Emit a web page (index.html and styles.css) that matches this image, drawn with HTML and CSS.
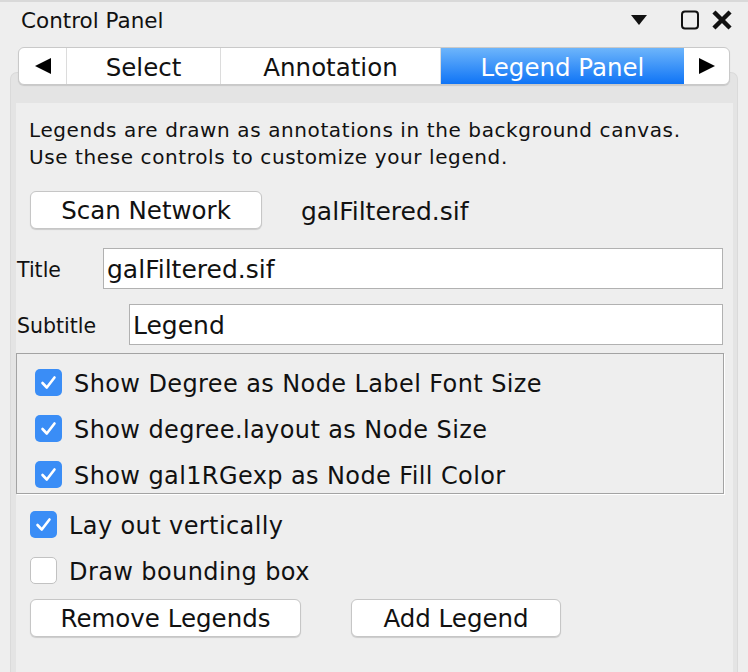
FILE: index.html
```html
<!DOCTYPE html>
<html>
<head>
<meta charset="utf-8">
<link rel="stylesheet" href="styles.css">
</head>
<body>
<div class="header">
  <span class="header-title">Control Panel</span>
  <div class="header-icons">
    <svg class="ic-down" width="18" height="12" viewBox="0 0 18 12"><path d="M1 1 H17 L9 11 Z" fill="#111"/></svg>
    <svg class="ic-max" width="20" height="20" viewBox="0 0 20 20"><rect x="2" y="1.5" width="16" height="17" rx="3" fill="none" stroke="#111" stroke-width="2"/></svg>
    <svg class="ic-close" width="20" height="20" viewBox="0 0 20 20"><path d="M3.5 3.5 L16.5 16.5 M16.5 3.5 L3.5 16.5" stroke="#111" stroke-width="4.4" stroke-linecap="square"/></svg>
  </div>
</div>

<div class="tabbar">
  <div class="tab tab-arrow"><svg width="18" height="18" viewBox="0 0 18 18"><path d="M17 1 V17 L1 9 Z" fill="#000"/></svg></div>
  <div class="tab tab-select">Select</div>
  <div class="tab tab-annot">Annotation</div>
  <div class="tab tab-legend active">Legend Panel</div>
  <div class="tab tab-arrow tab-right"><svg width="18" height="18" viewBox="0 0 18 18"><path d="M1 1 V17 L17 9 Z" fill="#000"/></svg></div>
</div>

<div class="pane">
  <div class="content">
    <p class="desc">Legends are drawn as annotations in the background canvas.<br>Use these controls to customize your legend.</p>

    <div class="scan-row">
      <button class="btn btn-scan">Scan Network</button>
      <span class="net-name">galFiltered.sif</span>
    </div>

    <div class="field-row">
      <span class="field-label">Title</span>
      <div class="field field-title">galFiltered.sif</div>
    </div>

    <div class="field-row field-row-sub">
      <span class="field-label">Subtitle</span>
      <div class="field field-sub">Legend</div>
    </div>

    <div class="group">
      <div class="check-row"><span class="cb on"><svg width="27" height="27" viewBox="0 0 27 27"><path d="M7.5 14 L11.8 18.5 L19.5 8.5" fill="none" stroke="#fff" stroke-width="2.6" stroke-linecap="round" stroke-linejoin="round"/></svg></span><span class="cb-label">Show Degree as Node Label Font Size</span></div>
      <div class="check-row"><span class="cb on"><svg width="27" height="27" viewBox="0 0 27 27"><path d="M7.5 14 L11.8 18.5 L19.5 8.5" fill="none" stroke="#fff" stroke-width="2.6" stroke-linecap="round" stroke-linejoin="round"/></svg></span><span class="cb-label">Show degree.layout as Node Size</span></div>
      <div class="check-row"><span class="cb on"><svg width="27" height="27" viewBox="0 0 27 27"><path d="M7.5 14 L11.8 18.5 L19.5 8.5" fill="none" stroke="#fff" stroke-width="2.6" stroke-linecap="round" stroke-linejoin="round"/></svg></span><span class="cb-label">Show gal1RGexp as Node Fill Color</span></div>
    </div>

    <div class="opts">
      <div class="check-row opt"><span class="cb on"><svg width="27" height="27" viewBox="0 0 27 27"><path d="M7.5 14 L11.8 18.5 L19.5 8.5" fill="none" stroke="#fff" stroke-width="2.6" stroke-linecap="round" stroke-linejoin="round"/></svg></span><span class="cb-label">Lay out vertically</span></div>
      <div class="check-row opt"><span class="cb off"></span><span class="cb-label">Draw bounding box</span></div>
    </div>

    <div class="btn-row">
      <button class="btn btn-remove">Remove Legends</button>
      <button class="btn btn-add">Add Legend</button>
    </div>
  </div>
</div>
</body>
</html>
```

FILE: styles.css
```css
html, body {
  margin: 0;
  padding: 0;
}
body {
  width: 748px;
  height: 672px;
  overflow: hidden;
  background: #eeeeee;
  font-family: "DejaVu Sans", "Noto Sans", sans-serif;
  color: #111;
  border-top: 2px solid #d9d9d9;
  box-sizing: border-box;
}
.header {
  height: 45px;
  display: flex;
  align-items: flex-start;
  justify-content: space-between;
  padding: 0 16px 0 21px;
  box-sizing: border-box;
}
.header-title {
  font-size: 21.5px;
  line-height: 22px;
  margin-top: 8px;
}
.header-icons {
  display: flex;
  align-items: center;
  margin-top: 8px;
}
.ic-down { margin-right: 32px; }
.ic-max { margin-right: 12px; }

.tabbar {
  position: relative;
  z-index: 1;
  margin: 0 18px;
  height: 38px;
  display: flex;
  background: #fff;
  border: 1px solid #c9c9c9;
  border-radius: 6px;
  box-sizing: border-box;
  box-shadow: 0 1px 1px rgba(0,0,0,0.12);
  overflow: hidden;
}
.tab {
  display: flex;
  align-items: center;
  justify-content: center;
  font-size: 24.5px;
  color: #111;
  border-right: 1px solid #dcdcdc;
  box-sizing: border-box;
  padding-top: 2px;
}
.tab-arrow { width: 48px; padding-top: 0; }
.tab-select { width: 154px; }
.tab-annot { width: 220px; }
.tab-legend { width: 243px; border-right: none; }
.tab-right { flex: 1; border-right: none; }
.tab.active {
  color: #fff;
  background: linear-gradient(#6db5fb, #0f74f6);
}

.pane {
  margin: -13px 10px 0 10px;
  height: 614px;
  background: #e4e4e4;
  border: 1px solid #dadada;
  border-bottom: none;
  border-radius: 7px 7px 0 0;
  padding: 30px 4px 0 5px;
  box-sizing: border-box;
}
.content {
  background: #eeeeee;
  height: 100%;
  padding-top: 14px;
  box-sizing: border-box;
}
.desc {
  margin: 0 0 0 13px;
  font-size: 20px;
  line-height: 27px;
  letter-spacing: 0.6px;
}
.scan-row {
  display: flex;
  align-items: center;
  margin-top: 20px;
  padding-left: 14px;
}
.btn {
  font-family: inherit;
  font-size: 24.5px;
  color: #111;
  background: #fff;
  border: 1px solid #c6c6c6;
  border-radius: 6px;
  box-shadow: 0 1px 1px rgba(0,0,0,0.15);
  height: 38px;
  padding: 1px 0 0 0;
}
.btn-scan { width: 232px; }
.net-name {
  font-size: 25px;
  margin-left: 39px;
  padding-top: 3px;
}
.field-row {
  display: flex;
  align-items: center;
  justify-content: space-between;
  margin-top: 19px;
  padding-left: 1px;
  padding-right: 10px;
}
.field-row-sub { margin-top: 15px; }
.field-label {
  font-size: 20.5px;
  padding-top: 3px;
}
.field {
  height: 41px;
  background: #fff;
  border: 1px solid #b1b1b1;
  box-sizing: border-box;
  font-size: 25px;
  line-height: 41px;
  padding-left: 3px;
}
.field-title { width: 620px; }
.field-sub { width: 594px; }

.group {
  margin-top: 8px;
  width: 708px;
  height: 141px;
  border: 1px solid #a3a3a3;
  box-shadow: 1px 1px 0 #ffffff;
  box-sizing: border-box;
  padding: 5px 0 0 18px;
}
.check-row {
  display: flex;
  align-items: center;
  height: 46px;
}
.cb {
  width: 27px;
  height: 27px;
  border-radius: 5px;
  box-sizing: border-box;
  flex: none;
  display: flex;
}
.cb.on { background: #3a8df6; }
.cb.off {
  background: #fff;
  border: 1px solid #c2c2c2;
}
.cb-label {
  font-size: 24px;
  margin-left: 12px;
  letter-spacing: 0.4px;
  padding-top: 3px;
}
.opts {
  padding: 7px 0 0 14px;
}
.btn-row {
  display: flex;
  padding-left: 14px;
  margin-top: 6px;
}
.btn-remove { width: 271px; }
.btn-add { width: 210px; margin-left: 50px; }
```
